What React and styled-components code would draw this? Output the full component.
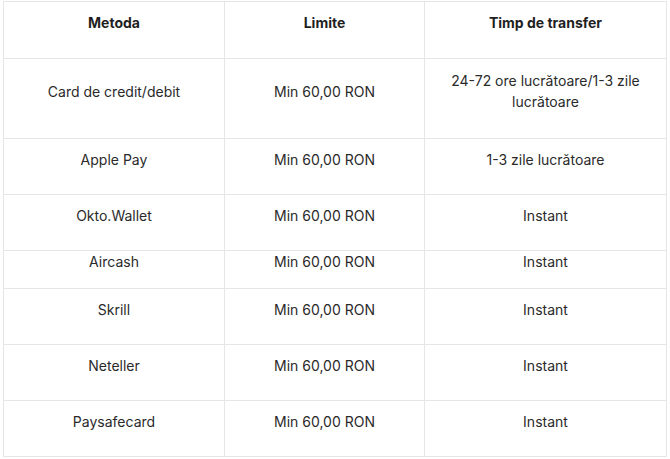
import React from "react";
import styled, { createGlobalStyle } from "styled-components";

const GlobalStyle = createGlobalStyle`
  body {
    margin: 0;
    background: #ffffff;
    font-family: Inter, "Noto Sans", sans-serif;
    color: #222222;
  }
`;

const rows = [
  { method: "Card de credit/debit", limit: "Min 60,00 RON", time: "24-72 ore lucrătoare/1-3 zile lucrătoare", tall: true },
  { method: "Apple Pay", limit: "Min 60,00 RON", time: "1-3 zile lucrătoare" },
  { method: "Okto.Wallet", limit: "Min 60,00 RON", time: "Instant" },
  { method: "Aircash", limit: "Min 60,00 RON", time: "Instant", compact: true },
  { method: "Skrill", limit: "Min 60,00 RON", time: "Instant" },
  { method: "Neteller", limit: "Min 60,00 RON", time: "Instant" },
  { method: "Paysafecard", limit: "Min 60,00 RON", time: "Instant" },
];

const App = () => {
  return (
    <Wrapper>
      <GlobalStyle />
      <Table>
        <colgroup>
          <col style={{ width: 221 }} />
          <col style={{ width: 200 }} />
          <col style={{ width: 242 }} />
        </colgroup>
        <thead>
          <tr>
            <HeadCell><Text>Metoda</Text></HeadCell>
            <HeadCell><Text>Limite</Text></HeadCell>
            <HeadCell><Text>Timp de transfer</Text></HeadCell>
          </tr>
        </thead>
        <tbody>
          {rows.map((r) => (
            <tr key={r.method}>
              <Cell $compact={r.compact} $tall={r.tall}><Text>{r.method}</Text></Cell>
              <Cell $compact={r.compact} $tall={r.tall}><Text>{r.limit}</Text></Cell>
              <Cell $compact={r.compact} $tall={r.tall}><Text>{r.time}</Text></Cell>
            </tr>
          ))}
        </tbody>
      </Table>
    </Wrapper>
  );
};

const Wrapper = styled.div`
  padding: 1px 0 0 3px;
  width: 670px;
  height: 459px;
  box-sizing: border-box;
`;
const Table = styled.table`
  width: 664px;
  border-collapse: collapse;
  table-layout: fixed;
  font-size: 14px;
  line-height: 21px;
`;
const HeadCell = styled.th`
  border: 1px solid #e6e6e6;
  padding: 10px 10px 10px;
  text-align: center;
  vertical-align: middle;
  font-weight: 700;
  color: #1f1f1f;
`;
const Cell = styled.td`
  border: 1px solid #e6e6e6;
  padding: ${(p) => (p.$compact ? "0 10px 1px" : p.$tall ? "11px 10px 11px" : "10px 10px 9px")};
  text-align: center;
  vertical-align: middle;
  color: #2a2a2a;
`;
const Text = styled.p`
  margin: 0 0 15px;
`;

export default App;
